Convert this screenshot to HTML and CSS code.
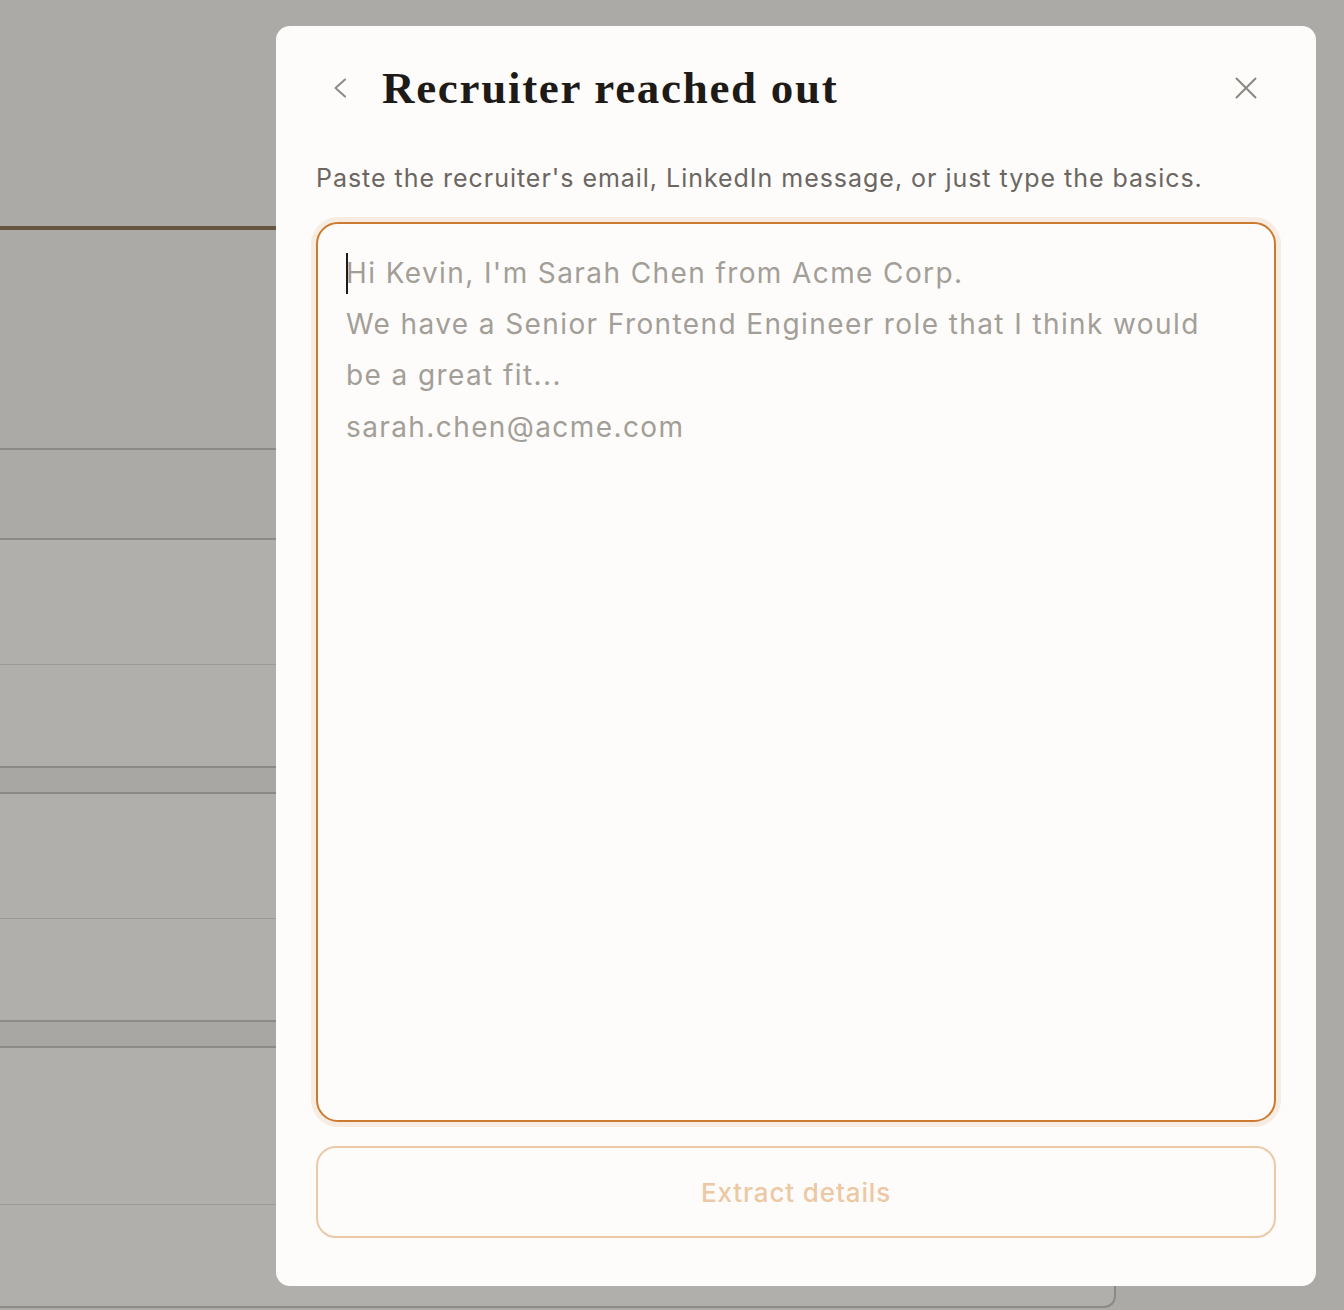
FILE: index.html
```html
<!DOCTYPE html>
<html lang="en">
<head>
<meta charset="utf-8">
<title>Recruiter reached out</title>
<link rel="stylesheet" href="styles.css">
</head>
<body>
<div class="page">
  <div class="page-head"></div>
  <div class="tabline"></div>
  <div class="sec sec-a"></div>
  <div class="sec sec-b"></div>
  <div class="card">
    <div class="row r-tall thin"></div>
    <div class="row r-mid"></div>
    <div class="row band"></div>
    <div class="row r-tall thin"></div>
    <div class="row r-mid"></div>
    <div class="row band"></div>
    <div class="row r-xl thin"></div>
    <div class="row r-last"></div>
  </div>
</div>

<div class="modal" role="dialog" aria-label="Recruiter reached out">
  <div class="head">
    <button class="icon-btn back" aria-label="Back">
      <svg width="14" height="20" viewBox="0 0 14 20" fill="none" stroke="#8d8984" stroke-width="2" stroke-linecap="round" stroke-linejoin="round"><polyline points="12,1.5 2.5,10 12,18.5"/></svg>
    </button>
    <h1 class="title">Recruiter reached out</h1>
    <button class="icon-btn close" aria-label="Close">
      <svg width="22" height="22" viewBox="0 0 22 22" fill="none" stroke="#8a8681" stroke-width="2" stroke-linecap="round"><path d="M1.5 1.5 L20.5 20.5 M20.5 1.5 L1.5 20.5"/></svg>
    </button>
  </div>
  <p class="sub">Paste the recruiter's email, LinkedIn message, or just type the basics.</p>
  <div class="field">
    <textarea class="input" placeholder="Hi Kevin, I'm Sarah Chen from Acme Corp.&#10;We have a Senior Frontend Engineer role that I think would&#10;be a great fit...&#10;sarah.chen@acme.com"></textarea>
    <span class="caret"></span>
  </div>
  <button class="btn" disabled>Extract details</button>
</div>
</body>
</html>
```
FILE: styles.css
```css
* { box-sizing: border-box; }
html, body { margin: 0; padding: 0; }
body {
  width: 1344px;
  height: 1310px;
  overflow: hidden;
  position: relative;
  background: #abaaa6;
  font-family: Inter, "Noto Sans", sans-serif;
}

/* dimmed page behind the dialog */
.page { width: 1116px; }
.page-head { height: 226px; }
.tabline { height: 4px; background: #66553f; }
.sec { border-bottom: 2px solid #8b8a86; }
.sec-a { height: 220px; }
.sec-b { height: 90px; }
.card {
  background: #b0afac;
  border-right: 2px solid #8b8a86;
  border-bottom: 2px solid #8b8a86;
  border-bottom-right-radius: 12px;
}
.row { border-bottom: 2px solid #8b8a86; }
.row.thin { border-bottom: 1px solid #9b9a96; }
.r-tall { height: 125px; }
.r-mid { height: 103px; }
.band { height: 26px; background: #a8a7a3; }
.r-xl { height: 157px; }
.r-last { height: 101px; border-bottom: 0; }

/* dialog */
.modal {
  position: absolute;
  left: 276px;
  top: 26px;
  width: 1040px;
  height: 1260px;
  background: #fdfcfa;
  border-radius: 14px;
  padding: 0 40px 48px;
  display: flex;
  flex-direction: column;
}
.head {
  height: 124px;
  display: flex;
  align-items: center;
  flex-shrink: 0;
}
.icon-btn {
  width: 48px;
  height: 48px;
  padding: 0;
  border: 0;
  background: none;
  display: flex;
  align-items: center;
  justify-content: center;
}
.title {
  margin: 0 0 0 18px;
  font-family: "Liberation Serif", "Times New Roman", serif;
  font-weight: 700;
  font-size: 45px;
  letter-spacing: 1.7px;
  line-height: 1.2;
  color: #1d1a17;
}
.close { margin-left: auto; margin-right: 6px; }
.sub {
  margin: 10px 0 26px;
  font-size: 25px;
  letter-spacing: 0.97px;
  line-height: 36px;
  color: #6b6661;
}
.field {
  position: relative;
  height: 900px;
  flex-shrink: 0;
}
.input {
  display: block;
  width: 100%;
  height: 100%;
  margin: 0;
  border: 2px solid #cc7a31;
  border-radius: 22px;
  box-shadow: 0 0 0 5px #f6ece2;
  background: #fdfcfa;
  padding: 24px 28px;
  font-family: Inter, "Noto Sans", sans-serif;
  font-size: 28px;
  letter-spacing: 1.4px;
  line-height: 51.2px;
  color: #2a2622;
  resize: none;
  outline: none;
  white-space: pre-wrap;
}
.input::placeholder { color: #a39e98; opacity: 1; }
.caret {
  position: absolute;
  left: 30px;
  top: 31px;
  width: 2px;
  height: 41px;
  background: #1d1a17;
}
.btn {
  margin-top: 24px;
  height: 92px;
  flex-shrink: 0;
  border: 2px solid #ecc9a7;
  border-radius: 20px;
  background: transparent;
  font-family: Inter, "Noto Sans", sans-serif;
  font-weight: 500;
  font-size: 26px;
  letter-spacing: 0.87px;
  color: #ecc8a4;
}
```
